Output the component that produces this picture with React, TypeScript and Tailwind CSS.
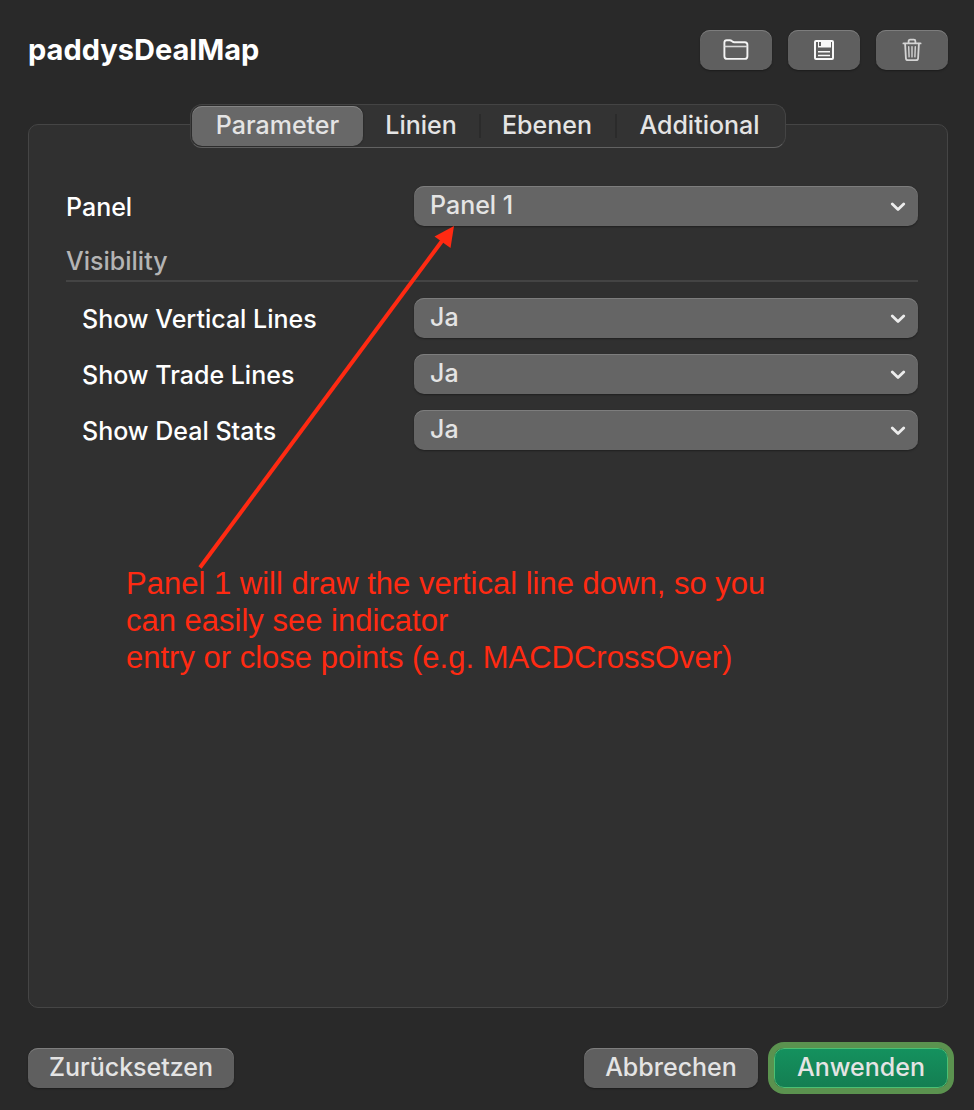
import React, { useState } from 'react';

const TABS = [
    { name: 'Parameter', width: 'w-[171px]' },
    { name: 'Linien', width: 'w-[116px]' },
    { name: 'Ebenen', width: 'w-[136px]' },
    { name: 'Additional', width: 'w-[169px]' }
];

const VISIBILITY_FIELDS = [
    { id: 'vertical-lines', label: 'Show Vertical Lines' },
    { id: 'trade-lines', label: 'Show Trade Lines' },
    { id: 'deal-stats', label: 'Show Deal Stats' }
];

const raised = 'shadow-[inset_0_1px_0_#7d7d7d,0_1px_2px_rgba(0,0,0,0.35)]';

const FolderIcon = () => (
    <svg width="26" height="24" viewBox="0 0 26 24" fill="none" stroke="#f4f4f4" strokeWidth="1.9" strokeLinejoin="round">
        <path d="M1.4 18.2V4.6Q1.4 2.2 3.8 2.2H6.8Q7.9 2.2 8.8 3L9.4 3.5Q10.2 4.2 11.4 4.2H21.8Q24.4 4.2 24.4 6.8V18.2Q24.4 20.9 21.8 20.9H4Q1.4 20.9 1.4 18.2Z" />
        <path d="M1.4 8.5H24.4" strokeWidth="1.6" stroke="#d8d8d8" />
    </svg>
);

const SaveIcon = () => (
    <svg width="20" height="20" viewBox="0 0 20 20" fill="none">
        <path d="M2 1H18Q19 1 19 2V18Q19 19 18 19H2Q1 19 1 18V2Q1 1 2 1Z" stroke="#f8f8f8" strokeWidth="2" />
        <path d="M4 1H17V7.5H4Z" fill="#f8f8f8" />
        <path d="M5 2H7V6H5Z" fill="#5f5f5f" />
        <path d="M4 11.8H16M4 15.4H16" stroke="#f8f8f8" strokeWidth="1.5" />
    </svg>
);

const TrashIcon = () => (
    <svg width="20" height="24" viewBox="0 0 20 24" fill="none" stroke="#d4d4d4" strokeWidth="1.8" strokeLinecap="round" strokeLinejoin="round">
        <path d="M1.4 5.4H18.6" />
        <path d="M6.6 5V3.2Q6.6 1.7 8.1 1.7H11.9Q13.4 1.7 13.4 3.2V5" />
        <path d="M3.1 5.6L3.9 20.2Q4 22.2 6 22.2H14Q16 22.2 16.1 20.2L16.9 5.6" />
        <path d="M6.7 8.6L7.1 18.9M10 8.6V18.9M13.3 8.6L12.9 18.9" strokeWidth="1.4" />
    </svg>
);

interface IconButtonProps {
    label: string;
    children: React.ReactNode;
}

const IconButton: React.FC<IconButtonProps> = ({ label, children }) => (
    <button aria-label={label} className={`flex h-10 w-18 items-center justify-center rounded-[10px] bg-[#5f5f5f] ${raised}`}>
        {children}
    </button>
);

interface SelectRowProps {
    id: string;
    label: string;
    options: string[];
    indent?: boolean;
}

const SelectRow: React.FC<SelectRowProps> = ({ id, label, options, indent = false }) => (
    <div className="grid grid-cols-[348px_1fr] items-center">
        <label htmlFor={id} className={indent ? 'pt-0.5 pl-4 text-white' : 'pt-0.5 text-white'}>
            {label}
        </label>
        <div className="relative">
            <select
                id={id}
                className={`block h-10 w-full appearance-none rounded-[10px] bg-[#656565] px-4 pb-0.5 text-[#e4e4e4] ${raised}`}
            >
                {options.map((option) => (
                    <option key={option}>{option}</option>
                ))}
            </select>
            <svg className="pointer-events-none absolute top-4 right-3" width="16" height="10" viewBox="0 0 16 10" fill="none">
                <path d="M2.3 1.9L8 7.4L13.7 1.9" stroke="#ececec" strokeWidth="2.8" strokeLinecap="round" strokeLinejoin="round" />
            </svg>
        </div>
    </div>
);

const Annotation = () => (
    <div className="pointer-events-none absolute top-[100px] left-[97px] w-[660px] text-[#ff2a12]">
        <svg className="ml-[68px] block" width="270" height="340" viewBox="0 0 270 340" overflow="visible">
            <path d="M6 342.5L248 16" stroke="currentColor" strokeWidth="4" />
            <path d="M260 1L240.5 11.5L256.5 23Z" fill="currentColor" />
        </svg>
        <p className="font-['Liberation_Sans',sans-serif] text-[31px] leading-[37px] font-normal">
            Panel 1 will draw the vertical line down, so you can easily see indicator
            <br />
            entry or close points (e.g. MACDCrossOver)
        </p>
    </div>
);

const App = () => {
    const [activeTab, setActiveTab] = useState('Parameter');

    return (
        <div className="flex min-h-screen flex-col bg-[#292929] pt-[30px] pr-[26px] pb-[22px] pl-7 font-['Inter',sans-serif] text-[25px] leading-8 font-medium">
            <header className="flex h-10 items-center justify-between">
                <h1 className="text-[29px] font-bold text-white">paddysDealMap</h1>
                <div className="flex gap-4">
                    <IconButton label="Open">
                        <FolderIcon />
                    </IconButton>
                    <IconButton label="Save">
                        <SaveIcon />
                    </IconButton>
                    <IconButton label="Delete">
                        <TrashIcon />
                    </IconButton>
                </div>
            </header>

            <nav className="z-10 mt-[34px] -mb-6 flex h-11 self-center rounded-xl border border-[#444444] border-b-[#626262] bg-[#333333] p-px">
                {TABS.map((tab, i) => (
                    <div key={tab.name} className={`relative ${tab.width}`}>
                        {i > 1 && <span className="absolute top-2 left-0 h-6 w-0.5 bg-[#2b2b2b]" />}
                        <button
                            onClick={() => setActiveTab(tab.name)}
                            className={`h-full w-full rounded-[10px] pb-0.5 text-[#e4e4e4] ${
                                activeTab === tab.name ? 'bg-[#686868] shadow-[inset_0_1px_0_#858585,0_0_2px_rgba(0,0,0,0.5)]' : ''
                            }`}
                        >
                            {tab.name}
                        </button>
                    </div>
                ))}
            </nav>

            <main className="relative flex-1 rounded-[10px] border border-[#454545] bg-[#303030] pt-[61px] pr-[29px] pl-[37px]">
                <SelectRow id="panel" label="Panel" options={['Panel 1']} />
                <h2 className="mt-[18px] mb-4 h-[38px] border-b-2 border-[#444444] pt-px text-[#b4b4b4]">Visibility</h2>
                <div className="flex flex-col gap-4">
                    {VISIBILITY_FIELDS.map((field) => (
                        <SelectRow key={field.id} id={field.id} label={field.label} options={['Ja', 'Nein']} indent />
                    ))}
                </div>
                <Annotation />
            </main>

            <footer className="mt-10 flex gap-4 text-[#e4e4e4]">
                <button className={`mr-auto h-10 w-[206px] rounded-[10px] bg-[#5f5f5f] pb-0.5 ${raised}`}>Zurücksetzen</button>
                <button className={`h-10 w-[174px] rounded-[10px] bg-[#5f5f5f] pb-0.5 ${raised}`}>Abbrechen</button>
                <button className="h-10 w-[174px] rounded-[10px] border border-[#4bc073] bg-linear-to-b from-[#14915e] to-[#147e52] pb-0.5 ring-6 ring-[#5b924f]">
                    Anwenden
                </button>
            </footer>
        </div>
    );
};

export default App;
